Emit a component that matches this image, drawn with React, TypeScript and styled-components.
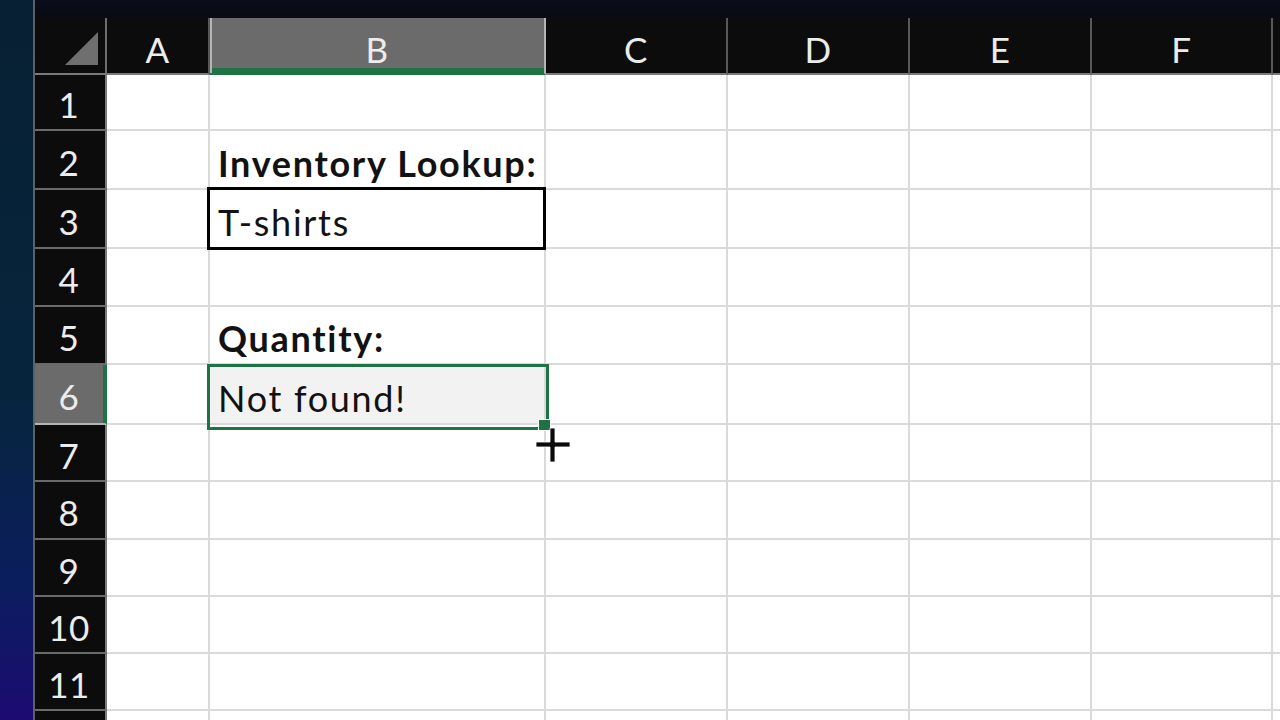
import React from "react";
import styled, { createGlobalStyle, css } from "styled-components";

const GlobalStyle = createGlobalStyle`
  html, body {
    margin: 0;
    padding: 0;
    background: #000;
    overflow: hidden;
  }
`;

const COLUMNS = ["A", "B", "C", "D", "E", "F", "G"];
const ROW_COUNT = 12;
const LAST_LABELLED_ROW = 11;

type CellData = { text: string; bold?: boolean; boxed?: boolean; selected?: boolean };

const cells: Record<string, CellData> = {
  B2: { text: "Inventory Lookup:", bold: true },
  B3: { text: "T-shirts", boxed: true },
  B5: { text: "Quantity:", bold: true },
  B6: { text: "Not found!", selected: true },
};

const Page = styled.div`
  display: flex;
  width: 1280px;
  height: 720px;
  overflow: hidden;
`;

const Desktop = styled.div`
  width: 33px;
  flex-shrink: 0;
  background: linear-gradient(
    to bottom,
    #072033 0%,
    #06253d 55%,
    #0b1d5e 82%,
    #1c0b72 100%
  );
  border-right: 2px solid #5c5f63;
`;

const Window = styled.div`
  flex: 1;
  display: flex;
  flex-direction: column;
  background: #fff;
`;

const TitleStrip = styled.div`
  height: 18px;
  flex-shrink: 0;
  background: linear-gradient(to bottom, #0a0e1a, #090b12);
`;

const Sheet = styled.div`
  display: grid;
  grid-template-columns: 72px 103px 336px 182px 182px 182px 181px 1fr;
  grid-template-rows: 57px 56px 59px 59px 58px 58px 60px 57px 58px 57px 57px 57px 57px;
  font-family: Lato, "Open Sans", sans-serif;
`;

const Corner = styled.div`
  background: #0c0c0c;
  border-right: 2px solid #6d6d6d;
  border-bottom: 2px solid #7a7a7a;
  display: flex;
  align-items: flex-end;
  justify-content: flex-end;
  padding: 0 7px 8px 0;
`;

const CornerTriangle = styled.div`
  width: 33px;
  height: 33px;
  background: #6f6f6f;
  clip-path: polygon(100% 0, 100% 100%, 0 100%);
`;

const ColHeader = styled.div<{ $selected?: boolean }>`
  background: #0c0c0c;
  border-right: 2px solid #585858;
  border-bottom: 2px solid #7a7a7a;
  color: #ececec;
  font-size: 35px;
  letter-spacing: 0.5px;
  display: flex;
  align-items: center;
  justify-content: center;
  padding-top: 6px;
  box-sizing: border-box;
  ${({ $selected }) =>
    $selected &&
    css`
      background: #6b6b6b;
      border-right-color: #b5b5b5;
      box-shadow: inset 2px 0 0 #b5b5b5, inset 0 -5px 0 #1f7244;
      border-bottom-color: #1f7244;
    `}
`;

const RowHeader = styled.div<{ $selected?: boolean }>`
  background: #0c0c0c;
  border-right: 2px solid #7a7a7a;
  border-bottom: 2px solid #6a6a6a;
  color: #ececec;
  font-size: 35px;
  letter-spacing: 0.5px;
  display: flex;
  align-items: center;
  justify-content: center;
  padding: 4px 2px 0 0;
  box-sizing: border-box;
  ${({ $selected }) =>
    $selected &&
    css`
      background: #6b6b6b;
      border-bottom-color: #b5b5b5;
      border-right-color: #1f7244;
      box-shadow: inset -2px 0 0 #1f7244;
    `}
`;

const Cell = styled.div<{ $bold?: boolean; $boxed?: boolean; $selected?: boolean }>`
  position: relative;
  background: #fff;
  border-right: 2px solid #dadada;
  border-bottom: 2px solid #dadada;
  display: flex;
  align-items: flex-end;
  padding: 0 6px 7px 8px;
  box-sizing: border-box;
  font-size: 36px;
  letter-spacing: 1.7px;
  line-height: 1;
  color: #121212;
  white-space: nowrap;
  font-weight: ${({ $bold }) => ($bold ? 700 : 400)};
  ${({ $boxed }) =>
    $boxed &&
    css`
      z-index: 1;
      &::after {
        content: "";
        position: absolute;
        top: -3px;
        left: -3px;
        right: -2px;
        bottom: -3px;
        border: 3px solid #000;
      }
    `}
  ${({ $selected }) =>
    $selected &&
    css`
      z-index: 2;
      background: #f2f2f2;
      &::after {
        content: "";
        position: absolute;
        top: -1px;
        left: -3px;
        right: -5px;
        bottom: -7px;
        border: 3px solid #1f7244;
      }
    `}
`;

const CellText = styled.span`
  position: relative;
  z-index: 1;
`;

const FillHandle = styled.div`
  position: absolute;
  left: 328px;
  top: 54px;
  width: 11px;
  height: 10px;
  background: #1f7244;
  border: 1px solid #fff;
  z-index: 3;
`;

const Cursor = styled.svg`
  position: absolute;
  left: 325px;
  top: 62px;
  z-index: 4;
`;

function PlusCursor() {
  return (
    <Cursor width="36" height="36" viewBox="0 0 36 36">
      <path
        d="M15 1h5v14h15v5H20v15h-5V20H1v-5h14z"
        fill="#0a0a0a"
        stroke="#fff"
        strokeWidth="0.8"
      />
    </Cursor>
  );
}

export default function App() {
  const rows = Array.from({ length: ROW_COUNT }, (_, i) => i + 1);
  return (
    <>
      <GlobalStyle />
      <Page>
        <Desktop />
        <Window>
          <TitleStrip />
          <Sheet>
            <Corner>
              <CornerTriangle />
            </Corner>
            {COLUMNS.map((c) => (
              <ColHeader key={c} $selected={c === "B"}>
                {c === "G" ? "" : c}
              </ColHeader>
            ))}
            {rows.map((r) => (
              <React.Fragment key={r}>
                <RowHeader $selected={r === 6}>{r <= LAST_LABELLED_ROW ? r : ""}</RowHeader>
                {COLUMNS.map((c) => {
                  const data = cells[`${c}${r}`];
                  return (
                    <Cell
                      key={c}
                      $bold={data?.bold}
                      $boxed={data?.boxed}
                      $selected={data?.selected}
                    >
                      {data && <CellText>{data.text}</CellText>}
                      {data?.selected && (
                        <>
                          <FillHandle />
                          <PlusCursor />
                        </>
                      )}
                    </Cell>
                  );
                })}
              </React.Fragment>
            ))}
          </Sheet>
        </Window>
      </Page>
    </>
  );
}
